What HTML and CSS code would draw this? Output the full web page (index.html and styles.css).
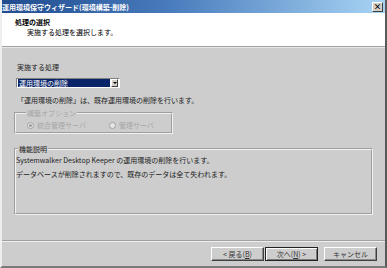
FILE: index.html
```html
<!DOCTYPE html>
<html lang="ja">
<head>
  <meta charset="UTF-8" />
  <title>運用環境保守ウィザード(環境構築-削除)</title>
  <link rel="stylesheet" href="styles.css">
</head>
<body>
  <div class="window">
    <div class="titlebar">
      <span class="title">運用環境保守ウィザード(環境構築-削除)</span>
      <span class="close">×</span>
    </div>

    <div class="header">
      <div class="head-title">処理の選択</div>
      <div class="head-sub">実施する処理を選択します。</div>
    </div>

    <div class="content">
      <div class="label">実施する処理</div>
      <div class="select">
        <span class="select-value">運用環境の削除</span>
        <span class="select-arrow"></span>
      </div>
      <div class="desc">「運用環境の削除」は、既存運用環境の削除を行います。</div>

      <fieldset class="group group-options">
        <legend>構築オプション</legend>
        <div class="radios">
          <label class="radio"><span class="dot checked"></span>統合管理サーバ</label>
          <label class="radio"><span class="dot"></span>管理サーバ</label>
        </div>
      </fieldset>

      <fieldset class="group group-info">
        <legend>機能説明</legend>
        <p>Systemwalker Desktop Keeper の運用環境の削除を行います。</p>
        <p>データベースが削除されますので、既存のデータは全て失われます。</p>
      </fieldset>
    </div>

    <div class="footer">
      <button class="btn">&lt; 戻る(<u>B</u>)</button>
      <button class="btn btn-default">次へ(<u>N</u>) &gt;</button>
      <button class="btn btn-cancel">キャンセル</button>
    </div>
  </div>
</body>
</html>
```

FILE: styles.css
```css
body {
  margin: 0;
  font-family: "Noto Sans CJK JP", "DejaVu Sans", sans-serif;
  font-size: 7px;
  line-height: 10px;
  color: #222;
}
.window {
  width: 387px;
  height: 268px;
  box-sizing: border-box;
  display: flex;
  flex-direction: column;
  background: #cdcdcd;
  border-left: 2px solid #eeeeee;
  border-right: 2px solid #5a5a5a;
  border-bottom: 2px solid #7a7a7a;
  overflow: hidden;
}
.titlebar {
  height: 13px;
  margin-left: -2px;
  display: flex;
  align-items: center;
  justify-content: space-between;
  padding-left: 2px;
  background: linear-gradient(to right, #1f4b8e, #4a7dbd 45%, #a8d4f4);
  color: #fff;
  font-weight: bold;
}
.close {
  width: 9px;
  height: 8px;
  margin-right: 2px;
  background: #d4d0c8;
  border: 1px solid;
  border-color: #fff #404040 #404040 #fff;
  color: #000;
  font-size: 8px;
  line-height: 8px;
  text-align: center;
  font-weight: bold;
}
.header {
  height: 34px;
  padding: 4px 0 0 13px;
  box-sizing: border-box;
  background: #fff;
  border-bottom: 1px solid #a0a0a0;
  box-shadow: 0 1px 0 #e8e8e8;
}
.head-title {
  font-weight: bold;
  color: #000;
}
.head-sub {
  padding-left: 12px;
  color: #000;
}
.content {
  padding: 15px 0 0 12px;
}
.label {
  padding-left: 3px;
}
.select {
  margin: 6px 0 0 2px;
  width: 104px;
  height: 10px;
  box-sizing: border-box;
  display: flex;
  align-items: stretch;
  background: #fff;
  border: 1px solid;
  border-color: #808080 #fff #fff #808080;
  padding: 0 1px 0 1px;
}
.select-value {
  flex: 1;
  background: #0a246a;
  color: #fff;
  line-height: 8px;
  padding-left: 1px;
}
.select-arrow {
  width: 7px;
  margin-left: 1px;
  background: #d4d0c8;
  border: 1px solid;
  border-color: #fff #404040 #404040 #fff;
  box-sizing: border-box;
  display: flex;
  align-items: center;
  justify-content: center;
}
.select-arrow::after {
  content: "";
  border-left: 2px solid transparent;
  border-right: 2px solid transparent;
  border-top: 2px solid #000;
}
.desc {
  margin-top: 7px;
  padding-left: 3px;
}
.group {
  margin: 0;
  padding: 0 0 0 8px;
  border: 2px groove #f2f2f2;
  min-width: 0;
}
.group legend {
  padding: 0 1px;
  margin-left: 2px;
  line-height: 10px;
}
.group-options {
  margin-top: 3px;
  width: 159px;
  box-sizing: border-box;
  height: 26px;
}
.group-options legend,
.radios {
  color: #a6a6a6;
}
.radios {
  display: flex;
  gap: 23px;
  padding: 2px 0 0 3px;
}
.radio {
  display: flex;
  align-items: center;
  gap: 3px;
}
.dot {
  width: 5px;
  height: 5px;
  border-radius: 50%;
  border: 1px solid #a0a0a0;
  background: #e6e6e6;
  position: relative;
}
.dot.checked::after {
  content: "";
  position: absolute;
  left: 1px;
  top: 1px;
  width: 3px;
  height: 3px;
  border-radius: 50%;
  background: #9a9a9a;
}
.group-info {
  margin-top: 10px;
  width: 359px;
  height: 71px;
  box-sizing: border-box;
  padding: 1px 0 0 0;
}
.group-info p {
  margin: 0 0 4px 0;
}
.footer {
  margin-top: auto;
  display: flex;
  justify-content: flex-end;
  padding: 6px 8px 5px 0;
  border-top: 1px solid #a0a0a0;
  box-shadow: inset 0 1px 0 #efefef;
}
.btn {
  width: 53px;
  height: 14px;
  margin: 0 0 0 1px;
  padding: 0;
  font-family: inherit;
  font-size: 7px;
  line-height: 10px;
  color: #333;
  background: #cdcdcd;
  border: 1px solid;
  border-color: #fff #404040 #404040 #fff;
  box-shadow: inset -1px -1px 0 #8a8a8a;
}
.btn-default {
  border: 1px solid #222;
  box-shadow: inset 1px 1px 0 #fff, inset -1px -1px 0 #7a7a7a;
}
.btn-cancel {
  margin-left: 6px;
}
```
